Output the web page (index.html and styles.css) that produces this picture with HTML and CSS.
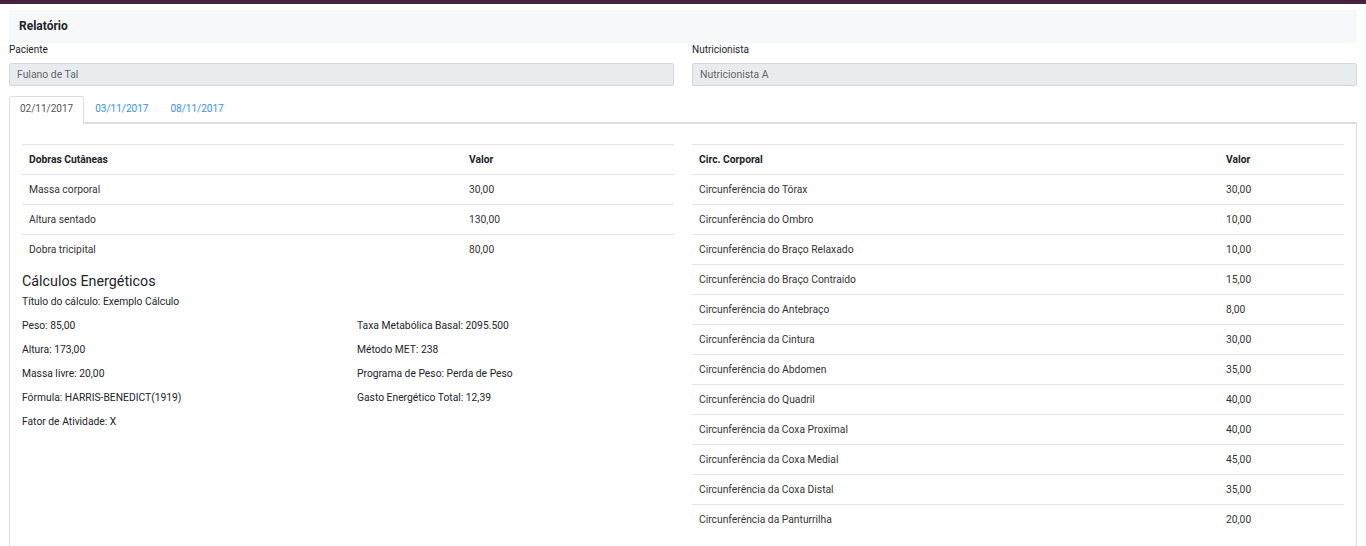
FILE: index.html
```html
<!DOCTYPE html>
<html lang="pt-BR">
<head>
<meta charset="utf-8">
<title>Relatório</title>
<link rel="stylesheet" href="styles.css">
</head>
<body>
<div class="topbar"></div>
<main class="page">
  <div class="card-header">Relatório</div>
  <div class="fields">
    <div class="field">
      <label class="field-label">Paciente</label>
      <div class="field-input">Fulano de Tal</div>
    </div>
    <div class="field">
      <label class="field-label">Nutricionista</label>
      <div class="field-input">Nutricionista A</div>
    </div>
  </div>
  <ul class="tabs">
    <li class="tab active">02/11/2017</li>
    <li class="tab">03/11/2017</li>
    <li class="tab">08/11/2017</li>
  </ul>
  <section class="panel">
    <div class="col">
      <table class="tbl tbl-left">
        <thead><tr><th>Dobras Cutâneas</th><th>Valor</th></tr></thead>
        <tbody>
          <tr><td>Massa corporal</td><td>30,00</td></tr>
          <tr><td>Altura sentado</td><td>130,00</td></tr>
          <tr><td>Dobra tricipital</td><td>80,00</td></tr>
        </tbody>
      </table>
      <h3 class="calc-title">Cálculos Energéticos</h3>
      <p class="calc-sub">Título do cálculo: Exemplo Cálculo</p>
      <div class="calc-grid">
        <div class="calc-col">
          <p>Peso: 85,00</p>
          <p>Altura: 173,00</p>
          <p>Massa livre: 20,00</p>
          <p>Fórmula: HARRIS-BENEDICT(1919)</p>
          <p>Fator de Atividade: X</p>
        </div>
        <div class="calc-col">
          <p>Taxa Metabólica Basal: 2095.500</p>
          <p>Método MET: 238</p>
          <p>Programa de Peso: Perda de Peso</p>
          <p>Gasto Energético Total: 12,39</p>
        </div>
      </div>
    </div>
    <div class="col">
      <table class="tbl tbl-right">
        <thead><tr><th>Circ. Corporal</th><th>Valor</th></tr></thead>
        <tbody>
          <tr><td>Circunferência do Tórax</td><td>30,00</td></tr>
          <tr><td>Circunferência do Ombro</td><td>10,00</td></tr>
          <tr><td>Circunferência do Braço Relaxado</td><td>10,00</td></tr>
          <tr><td>Circunferência do Braço Contraído</td><td>15,00</td></tr>
          <tr><td>Circunferência do Antebraço</td><td>8,00</td></tr>
          <tr><td>Circunferência da Cintura</td><td>30,00</td></tr>
          <tr><td>Circunferência do Abdomen</td><td>35,00</td></tr>
          <tr><td>Circunferência do Quadril</td><td>40,00</td></tr>
          <tr><td>Circunferência da Coxa Proximal</td><td>40,00</td></tr>
          <tr><td>Circunferência da Coxa Medial</td><td>45,00</td></tr>
          <tr><td>Circunferência da Coxa Distal</td><td>35,00</td></tr>
          <tr><td>Circunferência da Panturrilha</td><td>20,00</td></tr>
        </tbody>
      </table>
    </div>
  </section>
</main>
</body>
</html>
```
FILE: styles.css
```css
* { box-sizing: border-box; }
html, body { margin: 0; padding: 0; }
body {
  font-family: Roboto, "Liberation Sans", Arial, sans-serif;
  font-size: 10px;
  color: #212529;
  background: #fff;
}
.topbar {
  height: 4px;
  background: #45233f;
}
.page {
  padding: 6px 9px 0 9px;
}
.card-header {
  height: 33px;
  background: #f7f8fa;
  padding: 0 10px 2px 10px;
  display: flex;
  align-items: center;
  font-size: 12px;
  font-weight: 700;
  color: #212529;
}
.fields {
  display: grid;
  grid-template-columns: 665px 665px;
  column-gap: 18px;
}
.field-label {
  display: block;
  height: 20px;
  line-height: 12px;
  padding-top: 1px;
  font-size: 10px;
  color: #212529;
}
.field-input {
  height: 23px;
  background: #e9ecef;
  border: 1px solid #d5d9dd;
  border-radius: 2px;
  padding: 0 7px;
  display: flex;
  align-items: center;
  font-size: 10.4px;
  color: #5f666d;
}
.tabs {
  list-style: none;
  margin: 10px 0 0 0;
  padding: 0;
  display: flex;
  height: 26px;
}
.tab {
  height: 26px;
  padding: 0 10px 3px 10px;
  display: flex;
  align-items: center;
  color: #3391ff;
  font-size: 10px;
  border: 1px solid transparent;
  border-bottom: none;
}
.tab.active {
  color: #555;
  background: #fff;
  border-color: #ddd;
  border-radius: 2px 2px 0 0;
  position: relative;
  z-index: 1;
  margin-bottom: -2px;
  height: 28px;
  padding-bottom: 5px;
}
.panel {
  border: 1px solid #ddd;
  border-top: 2px solid #ddd;
  border-bottom: none;
  padding: 20px 12px 12px 12px;
  display: grid;
  grid-template-columns: 652px 652px;
  column-gap: 18px;
}
.tbl {
  width: 652px;
  border-collapse: collapse;
  font-size: 10.3px;
}
.tbl th, .tbl td {
  height: 30px;
  padding: 0 7px;
  border-top: 1px solid #e6e6e6;
  text-align: left;
  vertical-align: middle;
}
.tbl th {
  font-weight: 700;
  color: #212529;
}
.tbl td { color: #333; }
.tbl-left th:first-child { width: 440px; }
.tbl-right th:first-child { width: 527px; }
.calc-title {
  margin: 7px 0 0 0;
  font-size: 14.3px;
  font-weight: 400;
  line-height: 18px;
  color: #212529;
}
.calc-sub {
  margin: 6px 0 0 0;
  line-height: 12px;
  font-size: 10.3px;
  color: #212529;
}
.calc-grid {
  display: grid;
  grid-template-columns: 335px 1fr;
  margin-top: 12px;
}
.calc-col p {
  margin: 0 0 12px 0;
  line-height: 12px;
  font-size: 10.3px;
  color: #212529;
}
```
